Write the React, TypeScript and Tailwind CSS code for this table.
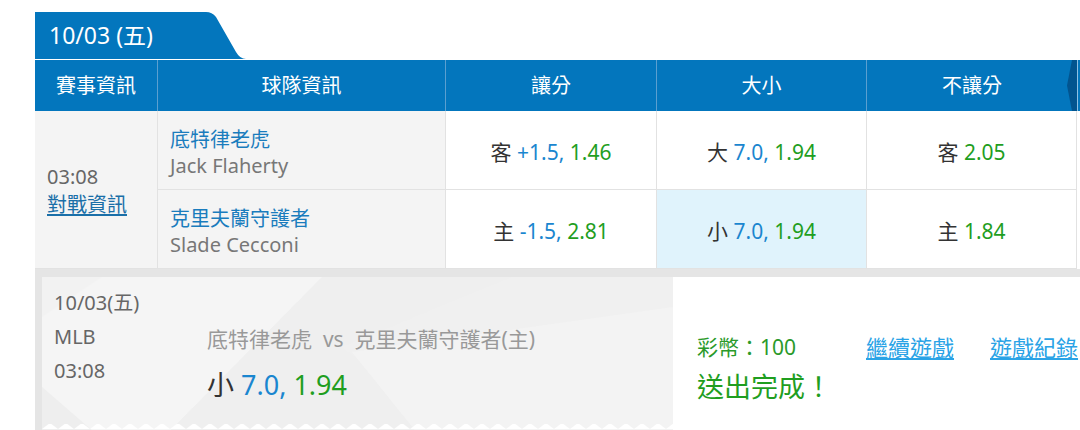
import React from 'react';

const font = { fontFamily: '"Noto Sans", "Noto Sans CJK TC", sans-serif' };

const rows = [
  {
    team: '底特律老虎',
    pitcher: 'Jack Flaherty',
    spread: { side: '客', line: '+1.5', odds: '1.46' },
    total: { side: '大', line: '7.0', odds: '1.94' },
    ml: { side: '客', odds: '2.05' },
  },
  {
    team: '克里夫蘭守護者',
    pitcher: 'Slade Cecconi',
    spread: { side: '主', line: '-1.5', odds: '2.81' },
    total: { side: '小', line: '7.0', odds: '1.94' },
    ml: { side: '主', odds: '1.84' },
  },
];

const Odds = ({ side, line, odds }: { side: string; line?: string; odds: string }) => (
  <span className="text-[21px] pt-[6px]">
    <span className="text-[#333]">{side} </span>
    {line && <span className="text-[#1a86cf]">{line}, </span>}
    <span className="text-[#1f9e1f]">{odds}</span>
  </span>
);

const App = () => {
  return (
    <div className="w-[1080px] h-[430px] bg-white overflow-hidden relative" style={font}>
      <div className="pl-[35px] pt-[12px]">
        {/* Date tab */}
        <div className="flex h-[47px]">
          <div className="w-[155px] bg-[#0376bd] text-white text-[23px] pl-[14px] flex items-center">10/03 (五)</div>
          <svg width="56" height="47" viewBox="0 0 56 47" className="block">
            <path d="M0 0 H16 Q22 0 26 5 L46 40 Q50 47 56 47 H0 Z" fill="#0376bd" />
          </svg>
        </div>

        {/* Table */}
        <div className="mt-[1px] grid grid-cols-[122px_288px_211px_210px_201px_10px_3px] w-[1045px]">
          {['賽事資訊', '球隊資訊', '讓分', '大小', '不讓分'].map((h, i) => (
            <div
              key={h}
              className={`h-[51px] bg-[#0376bd] text-white text-[20px] flex items-center justify-center ${i > 0 ? 'border-l border-[#5b9fd0]' : ''} ${i === 4 ? 'pl-[10px]' : ''}`}
            >
              {h}
            </div>
          ))}
          {/* scroll arrow */}
          <div className="h-[51px] bg-[#0376bd]">
            <svg width="10" height="51" viewBox="0 0 10 51" className="block">
              <path d="M10 0 V51 H5 L0 25.5 L5 0 Z" fill="#02548f" />
            </svg>
          </div>
          <div className="h-[51px] bg-[#0376bd] border-l border-[#8fc0e4]" />

          <div className="row-span-2 bg-[#f4f4f4] border-b border-[#e2e2e2] flex flex-col justify-center pl-[12px] pt-[2px] text-[20px] leading-[28px]">
            <span className="text-[#666]">03:08</span>
            <span className="text-[#1a6fa8] underline underline-offset-2">對戰資訊</span>
          </div>

          {rows.map((r, i) => (
            <React.Fragment key={r.team}>
              <div className="h-[79px] bg-[#f4f4f4] border-l border-b border-[#e2e2e2] pl-[12px] pt-[5px] flex flex-col justify-center text-[20px] leading-[26px]">
                <span className="text-[#1a7cbd]">{r.team}</span>
                <span className="text-[#777]">{r.pitcher}</span>
              </div>
              <div className="h-[79px] bg-white border-l border-b border-[#e2e2e2] flex items-center justify-center">
                <Odds {...r.spread} />
              </div>
              <div className={`h-[79px] border-l border-b border-[#e2e2e2] flex items-center justify-center ${i === 1 ? 'bg-[#e0f3fc]' : 'bg-white'}`}>
                <Odds {...r.total} />
              </div>
              <div className="col-span-2 h-[79px] bg-white border-l border-r border-b border-[#e2e2e2] flex items-center justify-center">
                <Odds {...r.ml} />
              </div>
              <div className="h-[79px] bg-white" />
            </React.Fragment>
          ))}
        </div>

        {/* Result panel */}
        <div className="bg-[#e5e5e5] pt-[8px] pl-[7px] h-[170px] flex">
          <div className="relative w-[631px] h-full bg-[#f2f2f2] overflow-hidden">
            <svg className="absolute inset-0" width="631" height="162" viewBox="0 0 631 162">
              <polygon points="0,40 60,0 280,0 120,162 0,162" fill="#f5f5f5" />
              <polygon points="120,162 280,0 470,0 420,162" fill="#efefef" />
              <polygon points="300,70 470,0 631,0 631,162 420,162" fill="#f0f0f0" />
              <polygon points="310,75 631,30 631,162 380,162" fill="#f3f3f3" />
              <polygon points="0,110 60,162 0,162" fill="#eeeeee" />
              <defs>
                <pattern id="zig" width="16" height="8" patternUnits="userSpaceOnUse">
                  <path d="M0 8 L8 2 L16 8 Z" fill="#ffffff" />
                </pattern>
              </defs>
              <rect x="0" y="147" width="631" height="8" fill="url(#zig)" />
              <rect x="0" y="155" width="631" height="7" fill="#ffffff" />
            </svg>
            <div className="relative flex pt-[9px] pl-[12px]">
              <div className="w-[153px] text-[20px] leading-[34px] text-[#666]">
                <div>10/03(五)</div>
                <div>MLB</div>
                <div>03:08</div>
              </div>
              <div className="pt-[38px]">
                <div className="text-[21px] text-[#999] leading-[30px]">底特律老虎&nbsp; vs&nbsp; 克里夫蘭守護者(主)</div>
                <div className="mt-[13px] text-[27px] leading-[36px]">
                  <span className="text-[#333]">小 </span>
                  <span className="text-[#1a86cf]">7.0, </span>
                  <span className="text-[#1f9e1f]">1.94</span>
                </div>
              </div>
            </div>
          </div>
          <div className="flex-1 bg-white flex pl-[24px] pt-[55px]">
            <div className="w-[169px]">
              <div className="text-[21px] leading-[30px] text-[#2a9a2a]">彩幣：100</div>
              <div className="mt-[7px] text-[27px] leading-[36px] text-[#1f9e1f]">送出完成！</div>
            </div>
            <a className="text-[22px] leading-[30px] text-[#2aa3e6] underline underline-offset-2 h-fit whitespace-nowrap">繼續遊戲</a>
            <a className="ml-[36px] text-[22px] leading-[30px] text-[#2aa3e6] underline underline-offset-2 h-fit whitespace-nowrap">遊戲紀錄</a>
          </div>
        </div>
      </div>
    </div>
  );
};

export default App;
